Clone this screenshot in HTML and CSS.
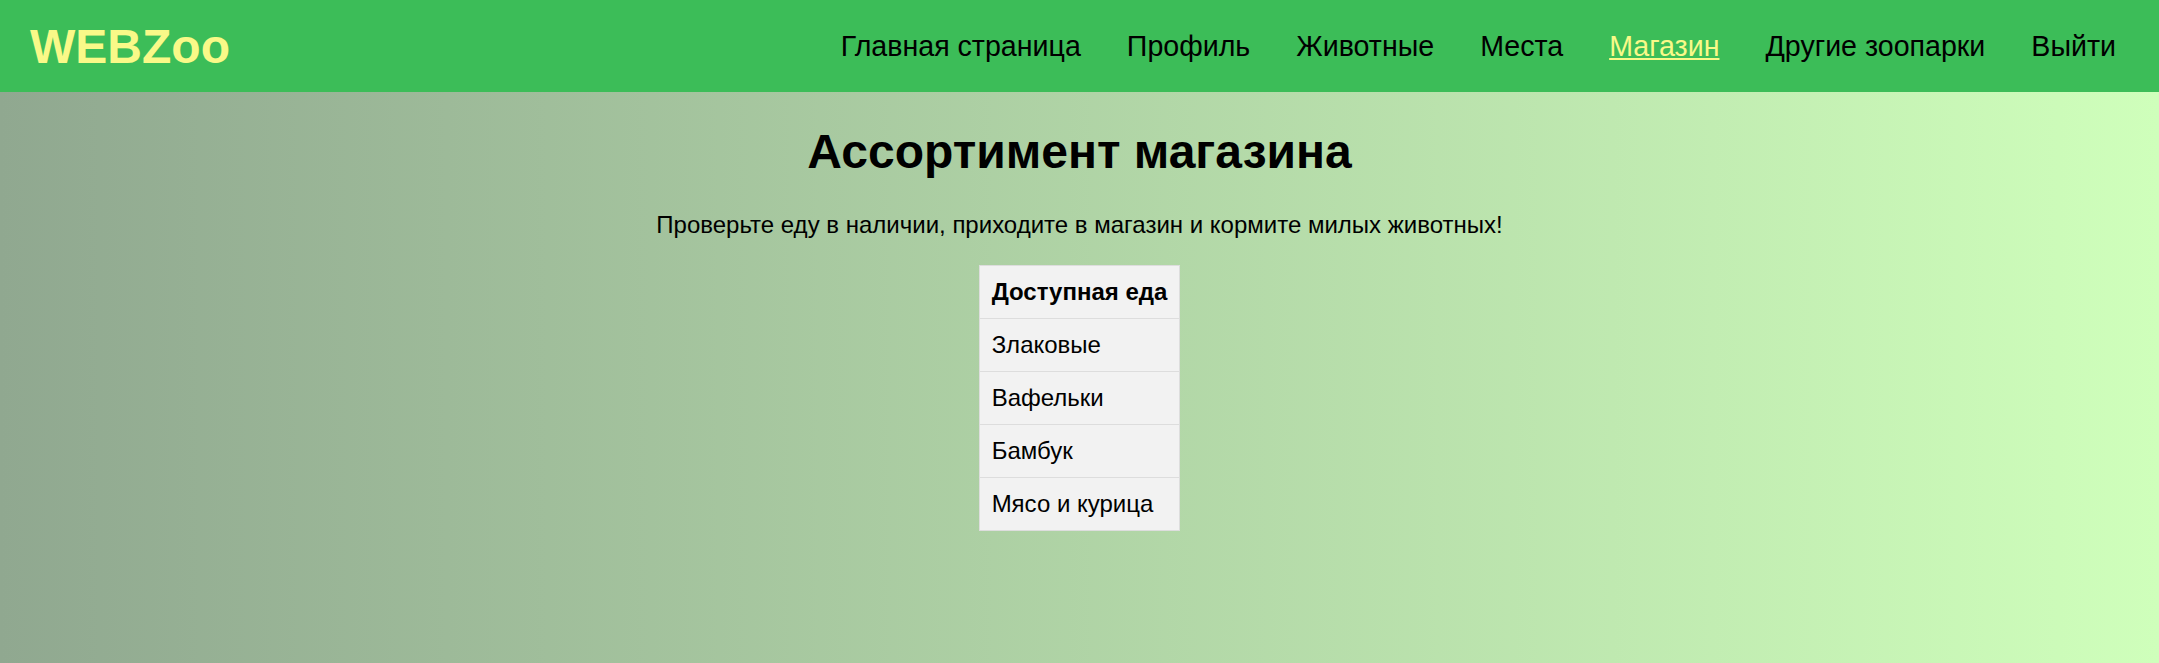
FILE: index.html
```html
<!DOCTYPE html>
<html lang="ru">
<head>
<meta charset="utf-8">
<title>WEBZoo — Магазин</title>
<link rel="stylesheet" href="styles.css">
</head>
<body>
<header class="topbar">
  <div class="logo">WEBZoo</div>
  <nav class="nav">
    <a href="#" class="nav-link">Главная страница</a>
    <a href="#" class="nav-link">Профиль</a>
    <a href="#" class="nav-link">Животные</a>
    <a href="#" class="nav-link">Места</a>
    <a href="#" class="nav-link active">Магазин</a>
    <a href="#" class="nav-link">Другие зоопарки</a>
    <a href="#" class="nav-link">Выйти</a>
  </nav>
</header>
<main class="content">
  <h1 class="title">Ассортимент магазина</h1>
  <p class="lead">Проверьте еду в наличии, приходите в магазин и кормите милых животных!</p>
  <table class="food">
    <thead>
      <tr><th>Доступная еда</th></tr>
    </thead>
    <tbody>
      <tr><td>Злаковые</td></tr>
      <tr><td>Вафельки</td></tr>
      <tr><td>Бамбук</td></tr>
      <tr><td>Мясо и курица</td></tr>
    </tbody>
  </table>
</main>
</body>
</html>
```
FILE: styles.css
```css
html, body {
  margin: 0;
  padding: 0;
}
body {
  min-height: 100vh;
  font-family: "Liberation Sans", Arial, sans-serif;
  font-size: 24px;
  color: #000;
  background: linear-gradient(to right, #90a890, #cfffbb);
}
.topbar {
  height: 92px;
  box-sizing: border-box;
  background: #3cbd58;
  display: flex;
  align-items: center;
  justify-content: space-between;
  padding: 0 43px 0 30px;
}
.logo {
  font-size: 48px;
  font-weight: bold;
  color: #f9f988;
}
.nav {
  display: flex;
  gap: 46px;
}
.nav-link {
  font-size: 28.6px;
  color: #000;
  text-decoration: none;
}
.nav-link.active {
  color: #f9f988;
  text-decoration: underline;
}
.content {
  display: flex;
  flex-direction: column;
  align-items: center;
}
.title {
  font-size: 48px;
  font-weight: bold;
  margin: 32px 0;
}
.lead {
  margin: 0 0 26px;
}
.food {
  border-collapse: collapse;
  background: #f2f2f2;
  border: 1px solid #dddddd;
}
.food th, .food td {
  text-align: left;
  padding: 12px;
  border-bottom: 1px solid #dddddd;
  font-size: 24px;
}
.food th {
  font-weight: bold;
}
```
